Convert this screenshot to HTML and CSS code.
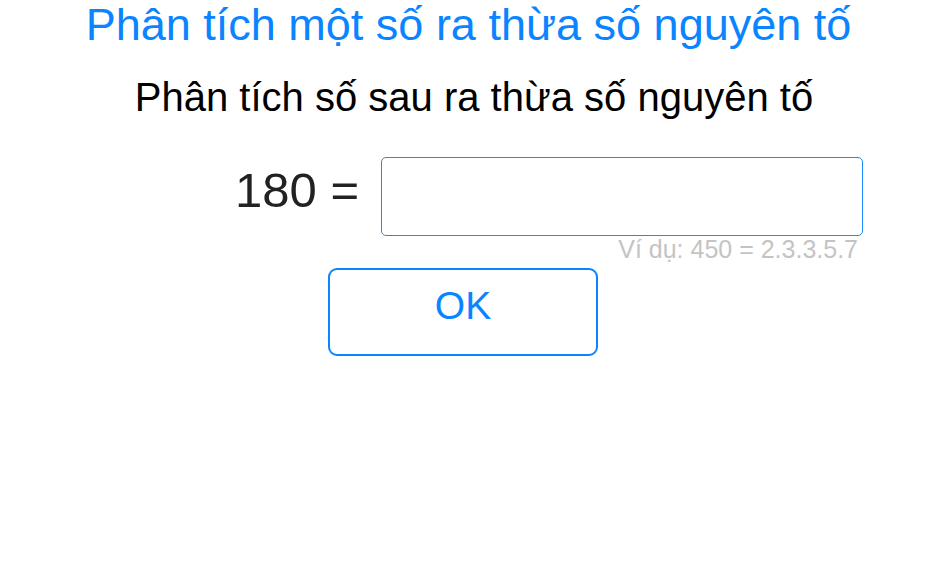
FILE: index.html
```html
<!DOCTYPE html>
<html lang="vi">
<head>
<meta charset="utf-8">
<link rel="stylesheet" href="styles.css">
</head>
<body>
<main class="page">
  <h1 class="title">Phân tích một số ra thừa số nguyên tố</h1>
  <p class="question">Phân tích số sau ra thừa số nguyên tố</p>
  <div class="answer-row">
    <label class="label" for="ans">180 =</label>
    <input class="answer" id="ans" type="text">
  </div>
  <div class="hint">Ví dụ: 450 = 2.3.3.5.7</div>
  <div class="actions">
    <button class="ok" type="button">OK</button>
  </div>
</main>
</body>
</html>
```
FILE: styles.css
```css
html, body {
  margin: 0;
  padding: 0;
  background: #fff;
}
body {
  font-family: "Liberation Sans", Arial, sans-serif;
  width: 940px;
  height: 588px;
  overflow: hidden;
}
.page {
  display: flex;
  flex-direction: column;
}
.title {
  margin: 0;
  padding-right: 3px;
  font-size: 45px;
  font-weight: normal;
  color: #0a84ff;
  text-align: center;
  line-height: 50px;
}
.question {
  margin: 25px 0 0;
  padding-left: 8px;
  font-size: 40px;
  color: #000;
  text-align: center;
  line-height: 44px;
}
.answer-row {
  display: flex;
  justify-content: flex-end;
  align-items: center;
  gap: 22px;
  padding-right: 77px;
  margin-top: 38px;
}
.label {
  font-size: 49px;
  color: #222;
  line-height: 56px;
  margin-bottom: 14px;
}
.answer {
  box-sizing: border-box;
  width: 482px;
  height: 79px;
  border: 1px solid #1a8cff;
  border-radius: 5px;
  outline: none;
  font-size: 32px;
  font-family: inherit;
  padding: 0 12px;
}
.hint {
  align-self: flex-end;
  margin-right: 82px;
  margin-top: 0;
  font-size: 25px;
  line-height: 27px;
  color: #c4c4c4;
}
.actions {
  display: flex;
  padding-left: 328px;
  margin-top: 5px;
}
.ok {
  box-sizing: border-box;
  width: 270px;
  height: 88px;
  background: #fff;
  border: 2px solid #0a84ff;
  border-radius: 9px;
  color: #0a84ff;
  font-family: inherit;
  font-size: 39px;
  padding: 0 0 12px;
}
```
